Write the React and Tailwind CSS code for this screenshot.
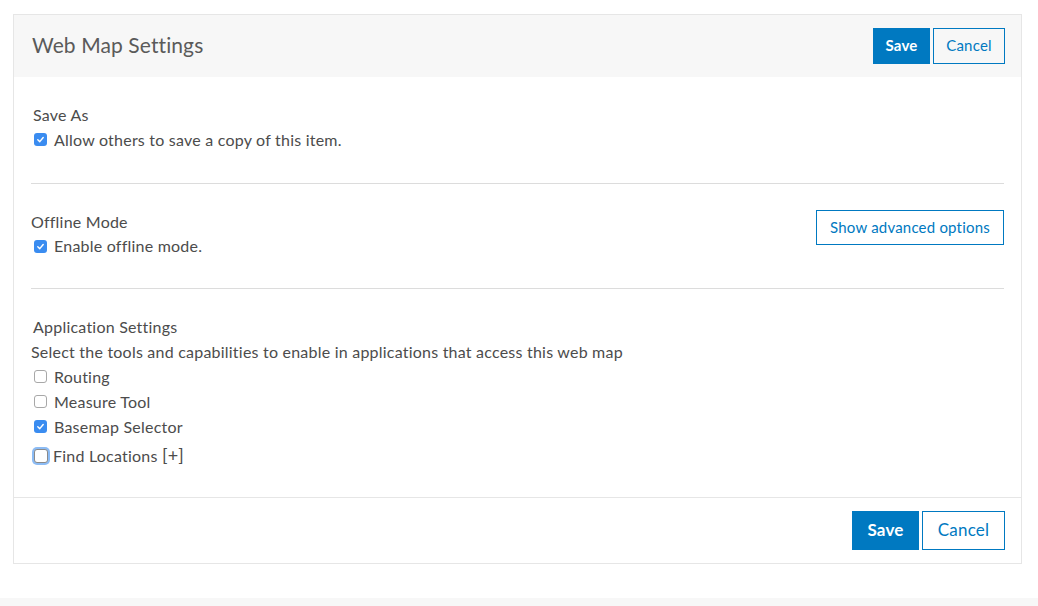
import React from "react";

const font = { fontFamily: "Lato, 'Open Sans', 'Liberation Sans', sans-serif" };

function Box({ checked, focus }) {
  if (checked) {
    return (
      <span className="inline-flex h-[13px] w-[13px] shrink-0 items-center justify-center rounded-[3px] bg-[#3a8cf0]">
        <svg width="9" height="9" viewBox="0 0 10 10">
          <path d="M2 5.3 L4.2 7.4 L8 2.8" fill="none" stroke="white" strokeWidth="1.6" strokeLinecap="round" strokeLinejoin="round" />
        </svg>
      </span>
    );
  }
  if (focus) {
    return (
      <span className="inline-block h-[14px] w-[14px] shrink-0 rounded-[3px] border border-[#8a8a8a] bg-white shadow-[0_0_0_2px_#8cbcf5]" />
    );
  }
  return <span className="inline-block h-[13px] w-[13px] shrink-0 rounded-[3px] border border-[#a8a8a8] bg-white" />;
}

function Row({ checked, focus, children, tall }) {
  return (
    <div className={"flex items-center pl-[3px] " + (tall ? "h-[29px] gap-[5px] pt-[4px]" : "h-[25px] gap-[7px]")}>
      <Box checked={checked} focus={focus} />
      <span>{children}</span>
    </div>
  );
}

export default function App() {
  return (
    <div className="min-h-[606px] w-[1038px] bg-white text-[#4c4c4c]" style={font}>
      <div className="pt-[14px] pl-[13px]">
        <div className="w-[1009px] border border-[#e6e6e6] bg-white">
          <div className="flex h-[62px] items-center justify-between bg-[#f7f7f7] pl-[18px] pr-[16px]">
            <h1 className="pb-[2px] text-[21px] font-normal tracking-[0.1px] text-[#5a5a5a]">Web Map Settings</h1>
            <div className="flex gap-[3px]">
              <button className="h-[36px] w-[57px] bg-[#0079c1] pb-[1px] text-[15px] font-bold tracking-[0.2px] text-white">Save</button>
              <button className="h-[36px] w-[72px] border border-[#0079c1] bg-[#f7f7f7] pb-[1px] text-[15px] tracking-[0.2px] text-[#0079c1]">Cancel</button>
            </div>
          </div>
          <div className="px-[17px] text-[16px] tracking-[0.22px]">
            <div className="border-b border-[#dcdcdc] pt-[25px] pb-[31px] leading-[25px]">
              <div className="pl-[2px]">Save As</div>
              <Row checked>Allow others to save a copy of this item.</Row>
            </div>
            <div className="flex items-start justify-between border-b border-[#dcdcdc] pt-[26px] pb-[30px] leading-[24px]">
              <div>
                <div>Offline Mode</div>
                <div className="flex h-[24px] items-center gap-[7px] pl-[3px]">
                  <Box checked />
                  <span>Enable offline mode.</span>
                </div>
              </div>
              <button className="h-[35px] w-[188px] border border-[#0079c1] pb-[1px] text-[15px] tracking-[0.2px] text-[#0079c1]">Show advanced options</button>
            </div>
            <div className="pt-[25px] pb-[29px] leading-[25px]">
              <div className="pl-[2px]">Application Settings</div>
              <div>Select the tools and capabilities to enable in applications that access this web map</div>
              <Row>Routing</Row>
              <Row>Measure Tool</Row>
              <Row checked>Basemap Selector</Row>
              <Row focus tall>
                Find Locations <span className="text-[18px]">[+]</span>
              </Row>
            </div>
          </div>
          <div className="flex justify-end gap-[3px] border-t border-[#e6e6e6] py-[13px] pr-[16px]">
            <button className="h-[39px] w-[67px] bg-[#0079c1] pb-[1px] text-[17px] font-bold tracking-[0.2px] text-white">Save</button>
            <button className="h-[39px] w-[83px] border border-[#0079c1] bg-white pb-[1px] text-[17px] tracking-[0.2px] text-[#0079c1]">Cancel</button>
          </div>
        </div>
      </div>
      <div className="mt-[34px] h-[8px] w-full bg-[#f7f7f7]" />
    </div>
  );
}
